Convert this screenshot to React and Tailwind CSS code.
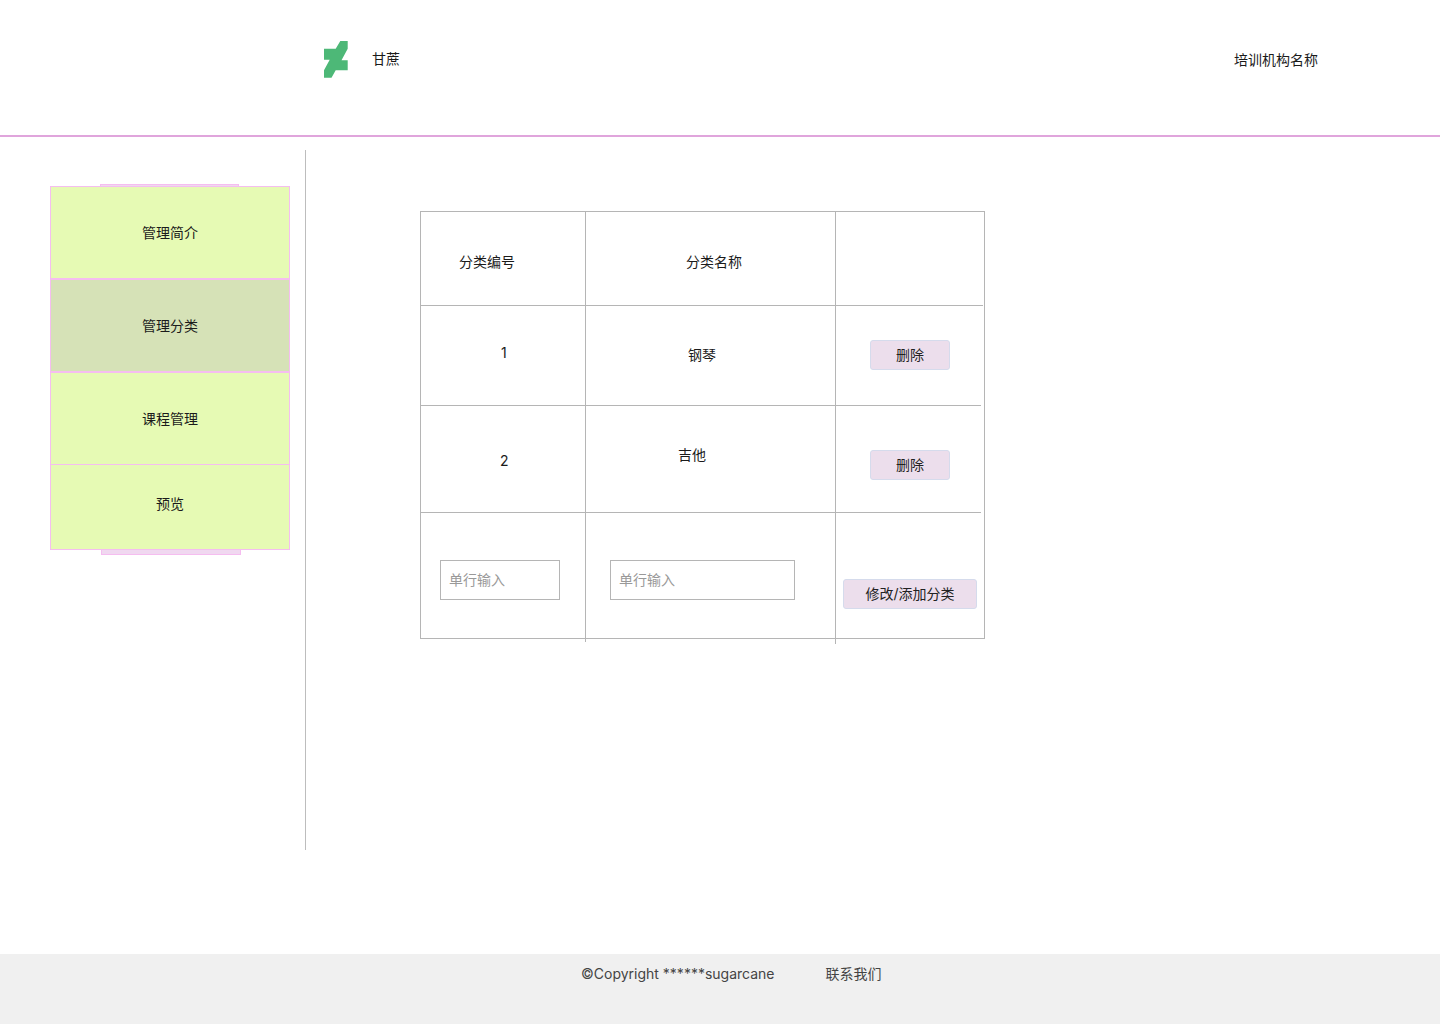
const font = { fontFamily: '"Inter", "Noto Sans CJK SC", sans-serif' };

function Logo() {
  return (
    <svg width="24" height="37" viewBox="0 0 24 37" className="block shrink-0">
      <path d="M16.3 0 H23.7 V7.7 L17.5 19.3 H23.7 V29.3 H11.7 L7.5 36.7 H0 V29.3 L5.7 18.7 H0 V7.7 H11.7 Z" fill="#4db877" />
    </svg>
  );
}

function Btn({ children, className }) {
  return (
    <div className={`h-[30px] flex items-center justify-center rounded-[3px] border border-[#d5dbec] bg-[#ecdeec] text-sm text-[#222] ${className}`}>
      {children}
    </div>
  );
}

function Field({ className }) {
  return (
    <div className={`h-10 flex items-center border border-[#b5b5b5] bg-white pl-2 text-sm text-[#999] ${className}`}>
      单行输入
    </div>
  );
}

function Item({ label, active, className }) {
  return (
    <div className={`flex justify-center border-x border-[#f5bdf0] text-sm leading-5 text-[#1b1b1b] ${active ? 'bg-[#d6e2b7]' : 'bg-[#e6fab4]'} ${className}`}>
      <span>{label}</span>
    </div>
  );
}

function Row({ height, cells }) {
  return (
    <div className={`flex ${height}`}>
      <div className="w-[165px] shrink-0 border-r border-[#b5b5b5]">{cells[0]}</div>
      <div className="w-[250px] shrink-0 border-r border-[#b5b5b5]">{cells[1]}</div>
      <div className="flex-1">{cells[2]}</div>
    </div>
  );
}

export default function App() {
  return (
    <div className="relative flex min-h-[1024px] w-[1440px] flex-col bg-white text-sm text-[#1b1b1b]" style={font}>
      <header className="flex h-[137px] shrink-0 items-start border-b-2 border-[#e0a5dc] pl-[324px] pr-[122px] pt-[41px]">
        <Logo />
        <span className="ml-[24px] mt-[8px] leading-5">甘蔗</span>
        <span className="ml-auto mt-[9px] leading-5">培训机构名称</span>
      </header>

      <div className="flex flex-1">
        <aside className="ml-[50px] mt-[13px] h-[700px] w-[256px] shrink-0 border-r border-[#bdbdbd] pt-[36px]">
          <div className="relative w-[240px]">
            <div className="absolute left-[50px] top-[-2px] h-[2px] w-[139px] border border-b-0 border-[#f5bdf0] bg-[#f0d8f0]" />
            <div className="absolute left-[51px] top-[364px] h-[5px] w-[140px] border border-t-0 border-[#f5bdf0] bg-[#f0d8f0]" />
            <div className="h-px bg-[#f5bdf0]" />
            <Item label="管理简介" className="h-[91px] pt-[36px]" />
            <div className="h-[2px] bg-[#f5bdf0]" />
            <Item label="管理分类" active className="h-[91px] pt-[36px]" />
            <div className="h-[2px] bg-[#f5bdf0]" />
            <Item label="课程管理" className="h-[91px] pt-[36px]" />
            <div className="h-px bg-[#f5bdf0]" />
            <Item label="预览" className="h-[84px] pt-[29px]" />
            <div className="h-px bg-[#f5bdf0]" />
          </div>
        </aside>

        <main className="ml-[114px] mt-[74px] self-start">
          <div className="relative h-[428px] w-[565px] border border-[#b5b5b5]">
            <Row
              height="h-[93px]"
              cells={[
                <div className="pl-[38px] pt-[40px] leading-5">分类编号</div>,
                <div className="pl-[100px] pt-[40px] leading-5">分类名称</div>,
                null,
              ]}
            />
            <div className="mr-px h-px bg-[#b5b5b5]" />
            <Row
              height="h-[99px]"
              cells={[
                <div className="pl-[80px] pt-[37px] leading-5">1</div>,
                <div className="pl-[102px] pt-[39px] leading-5">钢琴</div>,
                <Btn className="ml-[34px] mt-[34px] w-20">删除</Btn>,
              ]}
            />
            <div className="mr-[3px] h-px bg-[#b5b5b5]" />
            <Row
              height="h-[106px]"
              cells={[
                <div className="pl-[79px] pt-[45px] leading-5">2</div>,
                <div className="pl-[92px] pt-[39px] leading-5">吉他</div>,
                <Btn className="ml-[34px] mt-[44px] w-20">删除</Btn>,
              ]}
            />
            <div className="mr-[3px] h-px bg-[#b5b5b5]" />
            <Row
              height="h-[125px]"
              cells={[
                <div className="pl-[19px] pt-[47px]"><Field className="w-[120px]" /></div>,
                <div className="pl-6 pt-[47px]"><Field className="w-[185px]" /></div>,
                <Btn className="ml-[7px] mt-[66px] w-[134px]">修改/添加分类</Btn>,
              ]}
            />
            <div className="absolute left-[164px] top-[426px] h-[4px] w-px bg-[#b5b5b5]" />
            <div className="absolute left-[414px] top-[426px] h-[6px] w-px bg-[#b5b5b5]" />
          </div>
        </main>
      </div>

      <footer className="flex h-[70px] shrink-0 items-start bg-[#f0f0f0] pl-[581px] pt-[10px] text-[#444]">
        <span className="leading-5">©Copyright ******sugarcane</span>
        <span className="ml-[51px] leading-5">联系我们</span>
      </footer>
    </div>
  );
}
